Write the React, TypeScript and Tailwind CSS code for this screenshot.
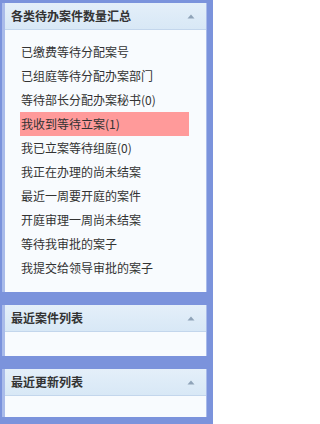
const items = [
  "已缴费等待分配案号",
  "已组庭等待分配办案部门",
  "等待部长分配办案秘书(0)",
  "我收到等待立案(1)",
  "我已立案等待组庭(0)",
  "我正在办理的尚未结案",
  "最近一周要开庭的案件",
  "开庭审理一周尚未结案",
  "等待我审批的案子",
  "我提交给领导审批的案子",
];

const Caret = () => (
  <svg width="8" height="5" viewBox="0 0 8 5" className="mr-[11px]">
    <path d="M4 0.5 L7.5 4.5 L0.5 4.5 Z" fill="#8fa3b8" />
  </svg>
);

const Header = ({ title }: { title: string }) => (
  <div className="h-[27px] flex items-center justify-between pl-[6px] bg-gradient-to-b from-[#e4eff9] to-[#d8e8f6] border-b border-[#c3d6ec]">
    <span className="text-[12px] font-bold text-[#333]">{title}</span>
    <Caret />
  </div>
);

export default function App() {
  return (
    <div
      className="w-[213px] h-[424px] bg-[#7b93dc] pt-[3px] pl-[2px] pr-[6px] flex flex-col overflow-hidden"
      style={{ fontFamily: '"Noto Sans CJK SC", sans-serif' }}
    >
      <div className="h-[289px] shrink-0 bg-[#f8fbfe] border-l-[3px] border-r border-[#a9bbea] flex flex-col">
        <Header title="各类待办案件数量汇总" />
        <ul className="pt-[10px] pl-[15px]">
          {items.map((t, i) => (
            <li
              key={t}
              className={`h-[24px] w-[169px] pl-[1px] flex items-center text-[12px] text-[#333] ${
                i === 3 ? "bg-[#ff9a9a]" : ""
              }`}
            >
              {t}
            </li>
          ))}
        </ul>
      </div>
      <div className="h-[13px] shrink-0" />
      <div className="h-[51px] shrink-0 bg-[#f8fbfe] border-l-[3px] border-r border-[#a9bbea] flex flex-col">
        <Header title="最近案件列表" />
      </div>
      <div className="h-[13px] shrink-0" />
      <div className="h-[48px] shrink-0 bg-[#f8fbfe] border-l-[3px] border-r border-[#a9bbea] flex flex-col">
        <Header title="最近更新列表" />
      </div>
    </div>
  );
}
